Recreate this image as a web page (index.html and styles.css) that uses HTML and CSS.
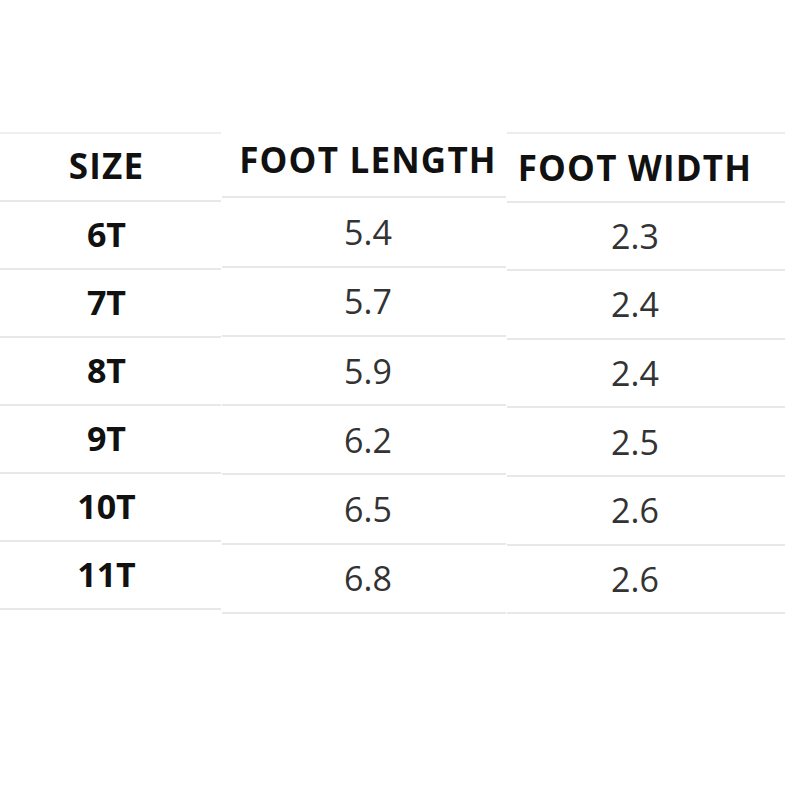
FILE: index.html
```html
<!DOCTYPE html>
<html>
<head>
<meta charset="utf-8">
<link rel="stylesheet" href="styles.css">
</head>
<body>
<div class="chart">
  <div class="col col-size">
    <div class="cell head">SIZE</div>
    <div class="cell label">6T</div>
    <div class="cell label">7T</div>
    <div class="cell label">8T</div>
    <div class="cell label">9T</div>
    <div class="cell label">10T</div>
    <div class="cell label">11T</div>
  </div>
  <div class="col col-length">
    <div class="cell head">FOOT LENGTH</div>
    <div class="cell val">5.4</div>
    <div class="cell val">5.7</div>
    <div class="cell val">5.9</div>
    <div class="cell val">6.2</div>
    <div class="cell val">6.5</div>
    <div class="cell val">6.8</div>
  </div>
  <div class="col col-width">
    <div class="cell head">FOOT WIDTH</div>
    <div class="cell val">2.3</div>
    <div class="cell val">2.4</div>
    <div class="cell val">2.4</div>
    <div class="cell val">2.5</div>
    <div class="cell val">2.6</div>
    <div class="cell val">2.6</div>
  </div>
</div>
</body>
</html>
```

FILE: styles.css
```css
html, body {
  margin: 0;
  padding: 0;
  background: #ffffff;
}

body {
  width: 800px;
  height: 800px;
  font-family: "Open Sans", "Noto Sans", sans-serif;
}

.chart {
  display: flex;
  align-items: flex-start;
  gap: 1px;
}

.col {
  display: flex;
  flex-direction: column;
}

.cell {
  display: flex;
  align-items: center;
  justify-content: center;
  box-sizing: border-box;
  border-bottom: 2px solid #e8e8e8;
  white-space: nowrap;
}

.head {
  font-weight: 700;
  font-size: 35px;
  letter-spacing: 1.2px;
  color: #111111;
}

.label {
  font-weight: 700;
  font-size: 34px;
  color: #111111;
}

.val {
  font-weight: 400;
  font-size: 34px;
  color: #333333;
}

.col-size {
  width: 221px;
  margin-top: 132px;
  border-top: 2px solid #efefef;
}

.col-size .cell {
  height: 68px;
  padding-right: 8px;
  padding-bottom: 3px;
}

.col-length {
  width: 284px;
  margin-top: 129px;
}

.col-length .cell {
  height: 69.3px;
  padding-left: 8px;
}

.col-length .head {
  padding-bottom: 6px;
}

.col-width {
  width: 278px;
  margin-top: 132px;
  border-top: 2px solid #ececec;
}

.col-width .cell {
  height: 68.6px;
  padding-right: 22px;
}
```
